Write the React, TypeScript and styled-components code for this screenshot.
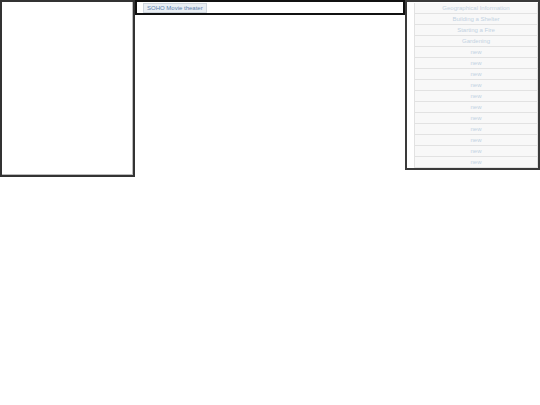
import React from 'react';
import styled, { createGlobalStyle } from 'styled-components';

const GlobalStyle = createGlobalStyle`
  html, body {
    margin: 0;
    padding: 0;
    background: #ffffff;
    font-family: "Liberation Sans", Arial, sans-serif;
  }
`;

const Page = styled.div`
  display: flex;
  flex-direction: row;
  align-items: flex-start;
  width: 540px;
`;

const SidePanel = styled.div`
  box-sizing: border-box;
  width: 135px;
  height: 177px;
  border: 2px solid #333333;
  box-shadow: inset -1px -1px 0 #bbbbbb;
`;

const TopBar = styled.div`
  box-sizing: border-box;
  width: 270px;
  height: 15px;
  border: 2px solid #111111;
  display: flex;
  align-items: center;
  padding-left: 6px;
`;

const TabButton = styled.button`
  box-sizing: border-box;
  height: 10px;
  padding: 0 3px;
  border: 1px solid #cfd6de;
  background: #e9eef3;
  color: #5d82ad;
  font-family: "Liberation Sans", Arial, sans-serif;
  font-size: 6px;
  line-height: 8px;
`;

const ListPanel = styled.div`
  box-sizing: border-box;
  width: 135px;
  height: 170px;
  border: 2px solid #3a3a3a;
  padding: 1px 0 0 7px;
  display: flex;
  flex-direction: column;
`;

const ListItem = styled.div`
  box-sizing: border-box;
  flex-shrink: 0;
  height: 11px;
  border: 1px solid #e2e2e2;
  border-top: none;
  background: #f8f8f8;
  color: #c3d2e2;
  font-size: 6px;
  line-height: 10px;
  text-align: center;
`;

const topics = [
  'Geographical Information',
  'Building a Shelter',
  'Starting a Fire',
  'Gardening',
];

export default function App() {
  const items = [...topics, ...Array(11).fill('new')];
  return (
    <>
      <GlobalStyle />
      <Page>
        <SidePanel />
        <TopBar>
          <TabButton>SOHO Movie theater</TabButton>
        </TopBar>
        <ListPanel>
          {items.map((label, i) => (
            <ListItem key={i}>{label}</ListItem>
          ))}
        </ListPanel>
      </Page>
    </>
  );
}
